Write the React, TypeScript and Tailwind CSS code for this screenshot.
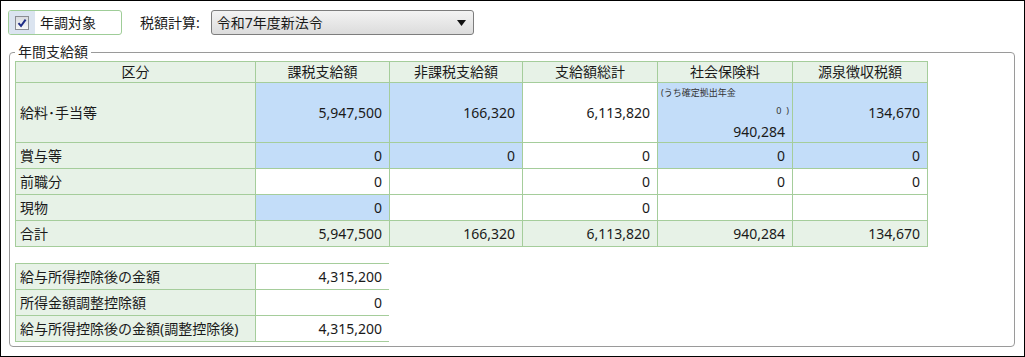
import React from "react";

type Bg = "g" | "b" | "w";

const bgClass: Record<Bg, string> = {
  g: "bg-[#e7f2e7]",
  b: "bg-[#c3ddf9]",
  w: "bg-white",
};

function Cell({ bg, value, label }: { bg: Bg; value?: string; label?: boolean }) {
  return (
    <div
      className={`${bgClass[bg]} flex items-center ${
        label ? "justify-start pl-[4px]" : "justify-end pr-[7px]"
      } text-[14px] leading-[18px] text-[#1a1a1a] whitespace-nowrap`}
    >
      {value}
    </div>
  );
}

const headers = ["区分", "課税支給額", "非課税支給額", "支給額総計", "社会保険料", "源泉徴収税額"];

const rows: { label: string; cells: [Bg, string][] }[] = [
  {
    label: "賞与等",
    cells: [
      ["b", "0"],
      ["b", "0"],
      ["w", "0"],
      ["b", "0"],
      ["b", "0"],
    ],
  },
  {
    label: "前職分",
    cells: [
      ["w", "0"],
      ["w", ""],
      ["w", "0"],
      ["w", "0"],
      ["w", "0"],
    ],
  },
  {
    label: "現物",
    cells: [
      ["b", "0"],
      ["w", ""],
      ["w", "0"],
      ["w", ""],
      ["w", ""],
    ],
  },
  {
    label: "合計",
    cells: [
      ["g", "5,947,500"],
      ["g", "166,320"],
      ["g", "6,113,820"],
      ["g", "940,284"],
      ["g", "134,670"],
    ],
  },
];

export default function App() {
  return (
    <div
      className="w-[1025px] h-[357px] border border-black bg-white pl-[7px] pt-[9px] text-[#1a1a1a] overflow-hidden"
      style={{ fontFamily: '"Noto Sans", "Noto Sans CJK JP", sans-serif' }}
    >
      {/* top bar */}
      <div className="flex items-center h-[25px]">
        <div className="flex items-stretch w-[114px] h-[25px] border border-[#9fcd98] rounded-[3px] bg-white overflow-hidden">
          <div className="w-[26px] bg-[#dbe4f0] flex items-center justify-center">
            <div className="w-[14px] h-[14px] border border-[#8a8c92] bg-gradient-to-b from-[#d9dbe0] to-[#f7f7f7] flex items-center justify-center">
              <svg width="10" height="10" viewBox="0 0 10 10">
                <path d="M1.5 5.2 L4 8 L8.6 1.6" fill="none" stroke="#1f2c86" strokeWidth="2" />
              </svg>
            </div>
          </div>
          <div className="flex items-center pl-[5px] text-[14px] leading-[18px]">年調対象</div>
        </div>
        <div className="ml-[18px] text-[14px] leading-[18px]">税額計算:</div>
        <div className="ml-[11px] w-[263px] h-[25px] border border-[#7d7d7d] rounded-[3px] bg-gradient-to-b from-[#f3f3f3] to-[#dcdcdc] flex items-center justify-between pl-[5px] pr-[7px]">
          <span className="text-[14px] leading-[18px]">令和7年度新法令</span>
          <svg width="9" height="6" viewBox="0 0 9 6">
            <path d="M0 0 H9 L4.5 6 Z" fill="#111" />
          </svg>
        </div>
      </div>

      {/* fieldset */}
      <fieldset className="mt-[8px] ml-[1px] w-[1006px] h-[304px] border border-[#9a9a9a] rounded-[4px] pl-[5px]">
        <legend className="px-[3px] text-[14px] leading-[18px] text-[#222]">年間支給額</legend>

        <div className="grid grid-cols-[239px_133px_132px_134px_134px_134px] grid-rows-[20px_59px_25px_25px_25px_25px] gap-[1px] p-[1px] bg-[#a5cd9b] w-[913px]">
          {headers.map((h) => (
            <div
              key={h}
              className="bg-[#e7f2e7] flex items-center justify-center text-[14px] leading-[18px] text-[#1a1a1a]"
            >
              {h}
            </div>
          ))}

          {/* row 1 */}
          <Cell bg="g" value="給料･手当等" label />
          <Cell bg="b" value="5,947,500" />
          <Cell bg="b" value="166,320" />
          <Cell bg="w" value="6,113,820" />
          <div className="bg-[#c3ddf9] flex flex-col pt-[3px] pl-[3px]">
            <div className="text-[9px] leading-[14px] text-[#333]">(うち確定拠出年金</div>
            <div className="mt-[4px] flex justify-end pr-[3px] text-[9px] leading-[14px] text-[#333]">
              <span>0</span>
              <span className="ml-[5px]">)</span>
            </div>
            <div className="mt-[5px] flex justify-end pr-[7px] text-[14px] leading-[18px]">940,284</div>
          </div>
          <Cell bg="b" value="134,670" />

          {rows.map((r) => (
            <React.Fragment key={r.label}>
              <Cell bg="g" value={r.label} label />
              {r.cells.map(([bg, v], i) => (
                <Cell key={i} bg={bg} value={v} />
              ))}
            </React.Fragment>
          ))}
        </div>

        <div className="mt-[16px] grid grid-cols-[239px_133px] grid-rows-[25px_25px_25px] gap-[1px] p-[1px] bg-[#a5cd9b] w-[374px]">
          <Cell bg="g" value="給与所得控除後の金額" label />
          <Cell bg="w" value="4,315,200" />
          <Cell bg="g" value="所得金額調整控除額" label />
          <Cell bg="w" value="0" />
          <Cell bg="g" value="給与所得控除後の金額(調整控除後)" label />
          <Cell bg="w" value="4,315,200" />
        </div>
      </fieldset>
    </div>
  );
}
